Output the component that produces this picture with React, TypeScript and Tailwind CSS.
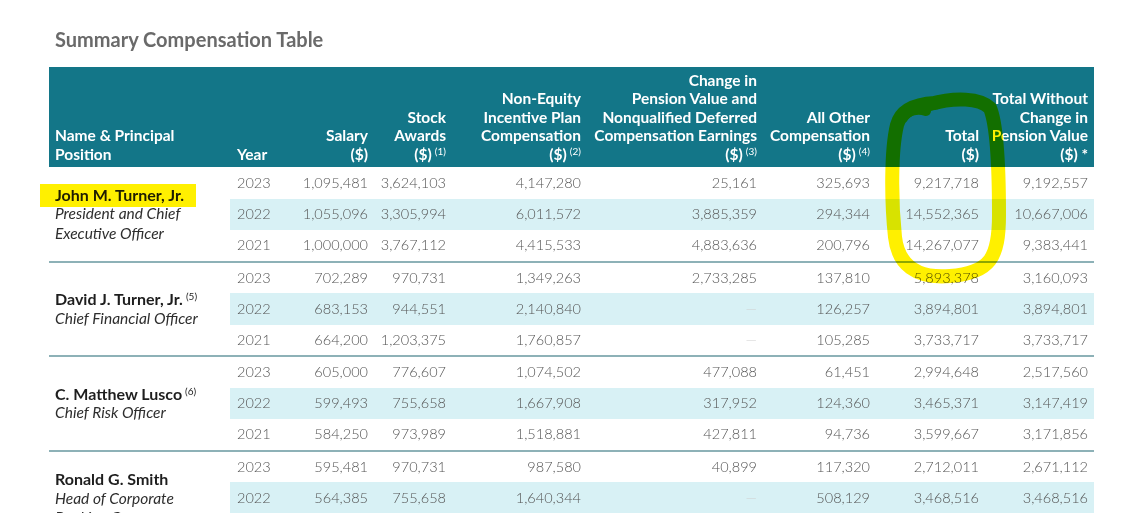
import { FC, Fragment, ReactNode } from "react";

type Row = {
  year: string;
  values: string[];
};

type Officer = {
  name: string;
  note?: string;
  title: string[];
  rows: Row[];
};

const officers: Officer[] = [
  {
    name: "John M. Turner, Jr.",
    title: ["President and Chief", "Executive Officer"],
    rows: [
      { year: "2023", values: ["1,095,481", "3,624,103", "4,147,280", "25,161", "325,693", "9,217,718", "9,192,557"] },
      { year: "2022", values: ["1,055,096", "3,305,994", "6,011,572", "3,885,359", "294,344", "14,552,365", "10,667,006"] },
      { year: "2021", values: ["1,000,000", "3,767,112", "4,415,533", "4,883,636", "200,796", "14,267,077", "9,383,441"] },
    ],
  },
  {
    name: "David J. Turner, Jr.",
    note: "(5)",
    title: ["Chief Financial Officer"],
    rows: [
      { year: "2023", values: ["702,289", "970,731", "1,349,263", "2,733,285", "137,810", "5,893,378", "3,160,093"] },
      { year: "2022", values: ["683,153", "944,551", "2,140,840", "—", "126,257", "3,894,801", "3,894,801"] },
      { year: "2021", values: ["664,200", "1,203,375", "1,760,857", "—", "105,285", "3,733,717", "3,733,717"] },
    ],
  },
  {
    name: "C. Matthew Lusco",
    note: "(6)",
    title: ["Chief Risk Officer"],
    rows: [
      { year: "2023", values: ["605,000", "776,607", "1,074,502", "477,088", "61,451", "2,994,648", "2,517,560"] },
      { year: "2022", values: ["599,493", "755,658", "1,667,908", "317,952", "124,360", "3,465,371", "3,147,419"] },
      { year: "2021", values: ["584,250", "973,989", "1,518,881", "427,811", "94,736", "3,599,667", "3,171,856"] },
    ],
  },
  {
    name: "Ronald G. Smith",
    title: ["Head of Corporate", "Banking Group"],
    rows: [
      { year: "2023", values: ["595,481", "970,731", "987,580", "40,899", "117,320", "2,712,011", "2,671,112"] },
      { year: "2022", values: ["564,385", "755,658", "1,640,344", "—", "508,129", "3,468,516", "3,468,516"] },
      { year: "2021", values: ["", "", "", "", "", "", ""] },
    ],
  },
];

const Sup: FC<{ children: ReactNode }> = ({ children }) => (
  <sup className="ml-[3px] text-[10px] font-normal">{children}</sup>
);

const headers: ReactNode[] = [
  <>Salary<br />($)</>,
  <>Stock<br />Awards<br />($)<Sup>(1)</Sup></>,
  <>Non-Equity<br />Incentive Plan<br />Compensation<br />($)<Sup>(2)</Sup></>,
  <>Change in<br />Pension Value and<br />Nonqualified Deferred<br />Compensation Earnings<br />($)<Sup>(3)</Sup></>,
  <>All Other<br />Compensation<br />($)<Sup>(4)</Sup></>,
  <>Total<br />($)</>,
  <>Total Without<br />Change in<br />Pension Value<br />($) *</>,
];

export default function App() {
  return (
    <div
      className="relative w-[1130px] h-[513px] overflow-hidden bg-white"
      style={{ fontFamily: "Lato, 'Open Sans', sans-serif" }}
    >
      <h1 className="pl-[55px] pt-[27px] text-[20px] leading-[24px] font-bold text-[#6a6a6a]">
        Summary Compensation Table
      </h1>

      <table className="mt-[16px] ml-[49px] w-[1045px] table-fixed">
        <colgroup>
          <col className="w-[181px]" />
          <col className="w-[44px]" />
          <col className="w-[100px]" />
          <col className="w-[78px]" />
          <col className="w-[135px]" />
          <col className="w-[176px]" />
          <col className="w-[113px]" />
          <col className="w-[109px]" />
          <col className="w-[109px]" />
        </colgroup>
        <thead>
          <tr className="h-[100px] bg-[#137688] text-white text-[15.5px] leading-[18.5px] font-bold">
            <th className="align-bottom text-left pl-[6px] pb-[4px]">
              Name &amp; Principal
              <br />
              Position
            </th>
            <th className="align-bottom text-left pl-[7px] pb-[4px]">Year</th>
            {headers.map((h, i) => (
              <th
                key={i}
                className="align-bottom text-right whitespace-nowrap pr-[6px] pb-[4px]"
              >
                {h}
              </th>
            ))}
          </tr>
        </thead>
        <tbody className="text-[14.5px]">
          {officers.map((o, gi) => (
            <Fragment key={o.name}>
              {o.rows.map((r, ri) => {
                const line = gi > 0 && ri === 0 ? "border-t-2 border-[#8db1b7]" : "";
                const stripe = ri === 1 ? "bg-[#d8f1f5]" : "";
                return (
                  <tr key={r.year} className="h-[31.5px]">
                    {ri === 0 && (
                      <td
                        rowSpan={3}
                        className={`align-middle bg-white pl-[6px] leading-[19.5px] text-[16px] ${line}`}
                      >
                        <div className="font-bold text-[#1e1e1e]">
                          {o.name}
                          {o.note && <Sup>{o.note}</Sup>}
                        </div>
                        {o.title.map((t) => (
                          <div key={t} className="italic text-[15.5px] text-[#2e2e2e]">
                            {t}
                          </div>
                        ))}
                      </td>
                    )}
                    <td className={`pl-[7px] font-light text-[#555] ${stripe} ${line}`}>
                      {r.year}
                    </td>
                    {r.values.map((v, vi) => (
                      <td
                        key={vi}
                        className={`text-right pr-[6px] font-light ${
                          v === "—" ? "text-[#cfcfcf]" : "text-[#555]"
                        } ${stripe} ${line}`}
                      >
                        {v}
                      </td>
                    ))}
                  </tr>
                );
              })}
            </Fragment>
          ))}
        </tbody>
      </table>

      {/* highlighter marks */}
      <div className="pointer-events-none absolute left-[40px] top-[184px] w-[156px] h-[23px] bg-[#fff000] mix-blend-multiply" />
      <svg
        className="pointer-events-none absolute left-0 top-0 mix-blend-multiply"
        width="1130"
        height="513"
        viewBox="0 0 1130 513"
        fill="none"
      >
        <path
          d="M930 104 C955 97 980 98 990 108 C997 125 999 170 999 215 C999 258 990 273 950 276 C915 279 898 264 895 237 C891 200 891 150 897 125 C901 110 915 104 935 103"
          stroke="#fff000"
          strokeWidth="14"
          strokeLinecap="round"
          strokeLinejoin="round"
        />
        <path
          d="M903 118 C908 110 918 108 926 111"
          stroke="#fff000"
          strokeWidth="10"
          strokeLinecap="round"
        />
      </svg>
    </div>
  );
}
